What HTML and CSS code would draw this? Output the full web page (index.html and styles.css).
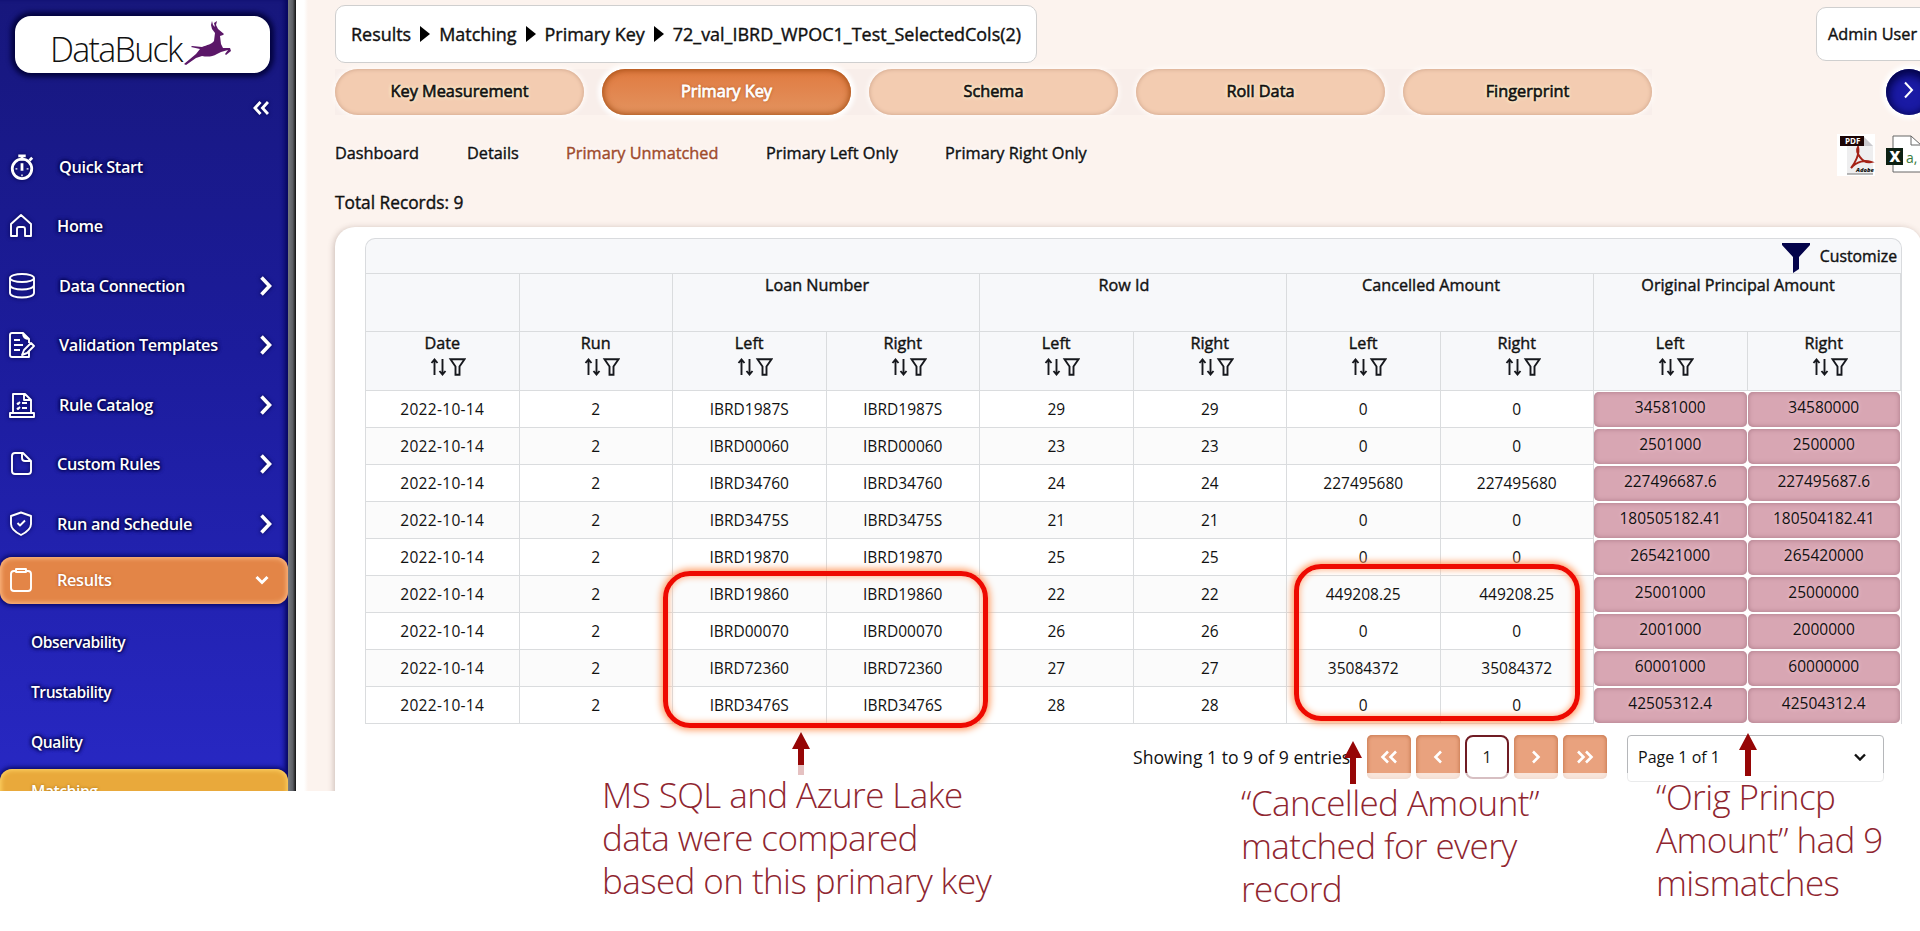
FILE: index.html
```html
<!DOCTYPE html>
<html lang="en">
<head>
<meta charset="UTF-8" />
<meta name="viewport" content="width=device-width, initial-scale=1" />
<title>DataBuck - Primary Unmatched</title>
<link rel="stylesheet" href="styles.css">
</head>
<body>
<!-- shared icons -->
<svg class="defs" width="0" height="0">
  <symbol id="sort-filter" viewBox="0 0 36 18">
    <path d="M4.500 17V2M1.500 5l3-3.500 3 3.500M12.500 1v15M9.500 13l3 3.500 3-3.500" fill="none" stroke="#16181d" stroke-width="1.900"/>
    <path d="M20.500 1.200h14l-5 7.300v8.300h-4V8.500z" fill="none" stroke="#16181d" stroke-width="1.900"/>
  </symbol>
  <symbol id="chevron" viewBox="0 0 14 20">
    <path d="M2.500 1.500L10.500 10l-8 8.500" fill="none" stroke="#fff" stroke-width="3.600"/>
  </symbol>
</svg>

<div class="app">
  <aside class="sidebar">
    <div class="logo">
      <span>DataBuck</span>
      <svg class="buck" width="48" height="46" viewBox="0 0 48 46">
        <path d="M1 44L13 34L17 29L8 27L9 26L19 27C24 25 29 24 31 21L32 13L29 9L28 5L29 1L30 5L32 7L31 3L34 1L33 5L35 9L41 14L40 15L37 16L38 24L40 28L47 28L48 31L43 35L42 34L45 30L38 32L34 34C29 37 24 37 19 36L13 38L3 45Z" fill="#5b1768"/>
      </svg>
    </div>
    <div class="collapse">
      <svg width="16" height="14" viewBox="0 0 16 14" fill="none" stroke="#fff" stroke-width="2.900"><path d="M7.500 1L2 7l5.500 6M15 1L9.500 7l5.500 6"/></svg>
    </div>
    <nav class="menu">
      <a class="item wide"><svg class="icon" viewBox="0 0 26 28"><circle cx="13" cy="16" r="10.500" stroke-width="3"/><path d="M9 2h8M13 2v5M21 7l3-3M13 10v8" stroke-width="3"/><path d="M6 16h2M18 16h2M13 22v2" stroke-width="1.500"/></svg><span>Quick Start</span></a>
      <a class="item"><svg class="icon" viewBox="0 0 26 26"><path d="M2 11L12 2l10 9v12h-6v-7q0-2-2-2h-4q-2 0-2 2v7H2z"/></svg><span>Home</span></a>
      <a class="item wide"><svg class="icon" viewBox="0 0 26 26"><ellipse cx="13" cy="5" rx="12" ry="4"/><path d="M1 5v15c0 6 24 6 24 0V5M1 12c0 6 24 6 24 0"/></svg><span>Data Connection</span><svg class="arrow"><use href="#chevron"/></svg></a>
      <a class="item wide"><svg class="icon" viewBox="0 0 26 26"><path d="M20 19v6H3q-2 0-2-2V3q0-2 2-2h11l6 6v4M14 1q0 6 6 6M5 8h6M5 13h9M5 18h6M13 23l2-5 7-7 3 3-7 7z"/></svg><span>Validation Templates</span><svg class="arrow"><use href="#chevron"/></svg></a>
      <a class="item wide"><svg class="icon" viewBox="0 0 26 26"><path d="M4 21V2h12l6 6v13M15 2v6h7M1 21h24v4H1zM8 11l1 1 2-2M8 16l1 1 2-2M13 11h5M13 16h5"/></svg><span>Rule Catalog</span><svg class="arrow"><use href="#chevron"/></svg></a>
      <a class="item"><svg class="icon" viewBox="0 0 26 26"><path d="M6 2h8l8 8v10q0 3-3 3H6q-3 0-3-3V5q0-3 3-3zM13 2v5q0 3 3 3h6"/></svg><span>Custom Rules</span><svg class="arrow"><use href="#chevron"/></svg></a>
      <a class="item"><svg class="icon" viewBox="0 0 26 26"><path d="M12 1.500l10 3.500v8q0 6-10 11Q2 19 2 13V5zM8.500 12l2.500 2.500 5-5"/></svg><span>Run and Schedule</span><svg class="arrow"><use href="#chevron"/></svg></a>
      <a class="item active"><svg class="icon" viewBox="0 0 26 26"><path d="M7 4H5Q2 4 2 7v14q0 3 3 3h14q3 0 3-3V7q0-3-3-3h-2M7 2h10v3H7z"/></svg><span>Results</span><svg class="down" viewBox="0 0 14 10"><path d="M1.500 2L7 7.500 12.500 2" fill="none" stroke="#fff" stroke-width="3"/></svg></a>
    </nav>
    <div class="submenu">
      <a>Observability</a>
      <a>Trustability</a>
      <a>Quality</a>
      <a class="current">Matching</a>
    </div>
  </aside>
  <div class="scrollbar"></div>

  <main class="main">
    <div class="topbar">
      <div class="breadcrumb"><span>Results</span><i></i><span>Matching</span><i></i><span>Primary Key</span><i></i><span>72_val_IBRD_WPOC1_Test_SelectedCols(2)</span></div>
      <div class="user">Admin User</div>
    </div>

    <div class="tabs">
      <div class="tab-list">
        <button class="tab">Key Measurement</button>
        <button class="tab on">Primary Key</button>
        <button class="tab">Schema</button>
        <button class="tab">Roll Data</button>
        <button class="tab">Fingerprint</button>
      </div>
      <button class="next"><svg width="12" height="18" viewBox="0 0 12 18"><path d="M2 1.500L9 9l-7 7.500" fill="none" stroke="#fff" stroke-width="2"/></svg></button>
    </div>

    <div class="subtabs">
      <a class="s1">Dashboard</a>
      <a class="s2">Details</a>
      <a class="s3">Primary Unmatched</a>
      <a class="s4">Primary Left Only</a>
      <a class="s5">Primary Right Only</a>
      <div class="exports">
        <svg width="38" height="42" viewBox="0 0 38 42">
          <path d="M0 0h38v42H0z" fill="#fff"/>
          <path d="M10 3h17l9 9v28H10z" fill="#eeeeef"/><path d="M27 3v9h9z" fill="#c9c9cd"/><path d="M10 40h26" stroke="#777"/>
          <path d="M14 34C18 29 23 20 21 13C18 18 25 30 34 28C28 26 20 27 14 34Z" fill="none" stroke="#a32116" stroke-width="2"/>
          <path d="M3 2h24v10H3z" fill="#1c0505"/>
          <text x="8" y="10" font-size="8" font-weight="700" fill="#fff">PDF</text>
          <text x="19" y="38" font-size="5.800" font-weight="800" font-style="italic" fill="#111">Adobe</text>
        </svg>
        <svg width="36" height="42" viewBox="0 0 36 42">
          <path d="M8 2h18l9 8v28H8z" fill="#fff"/>
          <path d="M36 38H8V2h18l10 9M26 2v9h10" fill="none" stroke="#666"/>
          <path d="M1 14h17v17H1z" fill="#0d2013"/>
          <text x="4.500" y="28" font-size="15" font-weight="800" fill="#fff">X</text>
          <text x="21" y="29" font-size="14" fill="#3c7c3e">a,</text>
        </svg>
      </div>
    </div>

    <div class="total">Total Records: 9</div>

    <section class="card">
      <div class="table-wrap">
        <div class="caption">
          <svg width="28" height="30" viewBox="0 0 28 30"><path d="M0 0h28v2L17 14v12l-6 4V14L0 2z" fill="#03034a"/></svg>
          <span>Customize</span>
        </div>
        <table>
          <thead>
            <tr class="groups"><th></th><th></th><th colspan="2">Loan Number</th><th colspan="2">Row Id</th><th colspan="2">Cancelled Amount</th><th colspan="2">Original Principal Amount</th></tr>
            <tr class="cols">
              <th>Date<svg><use href="#sort-filter"/></svg></th><th>Run<svg><use href="#sort-filter"/></svg></th>
              <th>Left<svg><use href="#sort-filter"/></svg></th><th>Right<svg><use href="#sort-filter"/></svg></th>
              <th>Left<svg><use href="#sort-filter"/></svg></th><th>Right<svg><use href="#sort-filter"/></svg></th>
              <th>Left<svg><use href="#sort-filter"/></svg></th><th>Right<svg><use href="#sort-filter"/></svg></th>
              <th>Left<svg><use href="#sort-filter"/></svg></th><th>Right<svg><use href="#sort-filter"/></svg></th>
            </tr>
          </thead>
          <tbody>
            <tr><td>2022-10-14</td><td>2</td><td>IBRD1987S</td><td>IBRD1987S</td><td>29</td><td>29</td><td>0</td><td>0</td><td class="diff"><div>34581000</div></td><td class="diff"><div>34580000</div></td></tr>
            <tr><td>2022-10-14</td><td>2</td><td>IBRD00060</td><td>IBRD00060</td><td>23</td><td>23</td><td>0</td><td>0</td><td class="diff"><div>2501000</div></td><td class="diff"><div>2500000</div></td></tr>
            <tr><td>2022-10-14</td><td>2</td><td>IBRD34760</td><td>IBRD34760</td><td>24</td><td>24</td><td>227495680</td><td>227495680</td><td class="diff"><div>227496687.6</div></td><td class="diff"><div>227495687.6</div></td></tr>
            <tr><td>2022-10-14</td><td>2</td><td>IBRD3475S</td><td>IBRD3475S</td><td>21</td><td>21</td><td>0</td><td>0</td><td class="diff"><div>180505182.41</div></td><td class="diff"><div>180504182.41</div></td></tr>
            <tr><td>2022-10-14</td><td>2</td><td>IBRD19870</td><td>IBRD19870</td><td>25</td><td>25</td><td>0</td><td>0</td><td class="diff"><div>265421000</div></td><td class="diff"><div>265420000</div></td></tr>
            <tr><td>2022-10-14</td><td>2</td><td>IBRD19860</td><td>IBRD19860</td><td>22</td><td>22</td><td>449208.25</td><td>449208.25</td><td class="diff"><div>25001000</div></td><td class="diff"><div>25000000</div></td></tr>
            <tr><td>2022-10-14</td><td>2</td><td>IBRD00070</td><td>IBRD00070</td><td>26</td><td>26</td><td>0</td><td>0</td><td class="diff"><div>2001000</div></td><td class="diff"><div>2000000</div></td></tr>
            <tr><td>2022-10-14</td><td>2</td><td>IBRD72360</td><td>IBRD72360</td><td>27</td><td>27</td><td>35084372</td><td>35084372</td><td class="diff"><div>60001000</div></td><td class="diff"><div>60000000</div></td></tr>
            <tr><td>2022-10-14</td><td>2</td><td>IBRD3476S</td><td>IBRD3476S</td><td>28</td><td>28</td><td>0</td><td>0</td><td class="diff"><div>42505312.4</div></td><td class="diff"><div>42504312.4</div></td></tr>
          </tbody>
        </table>
      </div>
      <div class="pager">
        <span class="showing">Showing 1 to 9 of 9 entries</span>
        <button><svg width="18" height="14" viewBox="0 0 18 14"><path d="M8 1.500L2.500 7 8 12.500M16 1.500L10.500 7l5.500 5.500"/></svg></button>
        <button><svg width="10" height="14" viewBox="0 0 10 14"><path d="M8 1.500L2.500 7 8 12.500"/></svg></button>
        <button class="page">1</button>
        <button><svg width="10" height="14" viewBox="0 0 10 14"><path d="M2 1.500L7.500 7 2 12.500"/></svg></button>
        <button><svg width="18" height="14" viewBox="0 0 18 14"><path d="M2 1.500L7.500 7 2 12.500M10 1.500L15.500 7 10 12.500"/></svg></button>
        <div class="select"><span>Page 1 of 1</span><svg width="12" height="8" viewBox="0 0 12 8"><path d="M1 1.500l5 5 5-5" fill="none" stroke="#111" stroke-width="2.400"/></svg></div>
      </div>
    </section>
  </main>
</div>

<!-- callouts over the table -->
<div class="mark mark-key"></div>
<div class="mark mark-cancelled"></div>
<div class="fade"></div>
<svg class="up up-key" viewBox="0 0 18 43"><path d="M9 0l9 17h-6v16H6V17H0z"/><path d="M6 33h6v10H6z" opacity=".25"/></svg>
<svg class="up up-cancelled" viewBox="0 0 18 43"><path d="M9 0l9 17h-6v26H6V17H0z"/></svg>
<svg class="up up-orig" viewBox="0 0 18 43"><path d="M9 0l9 17h-6v26H6V17H0z"/></svg>
<p class="note note-key">MS SQL and Azure Lake<br>data were compared<br>based on this primary key</p>
<p class="note note-cancelled">“Cancelled Amount”<br>matched for every<br>record</p>
<p class="note note-orig">“Orig Princp<br>Amount” had 9<br>mismatches</p>
</body>
</html>
```

FILE: styles.css
```css
* {
  box-sizing: border-box;
}
body {
  margin: 0;
  width: 1920px;
  height: 931px;
  position: relative;
  overflow: hidden;
  background: #fff;
  color: #111;
  font-family: 'Open Sans', 'Noto Sans', sans-serif;
  font-size: 15.5px;
}
.defs {
  position: absolute;
}
button {
  font-family: inherit;
  border: none;
  padding: 0;
}
.app {
  display: flex;
  height: 791px;
  overflow: hidden;
}

/* sidebar */
.sidebar {
  flex: 0 0 288px;
  background: linear-gradient(#17177c, #1c1c9c 45%, #2828c4);
  box-shadow: inset -5px 0 5px -2px #05055c;
  color: #fff;
  font-size: 16.3px;
  font-weight: 600;
  text-shadow: 0 0 4px #00004a, 0 0 4px #00004a, 0 0 3px #00004a;
}
.logo {
  display: flex;
  align-items: center;
  width: 255px;
  height: 57px;
  margin: 16px 0 0 15px;
  padding-left: 35px;
  border-radius: 16px;
  background: #fff;
  box-shadow: 0 0 5px 4px #03033f;
  color: #111;
  font-size: 34px;
  font-weight: 300;
  letter-spacing: -1.7px;
  text-shadow: none;
}
.logo span {
  margin-top: 9px;
  width: 133px;
}
.buck {
  margin-top: -4px;
}
.collapse {
  display: flex;
  justify-content: flex-end;
  padding: 28px 19px 0 0;
  height: 63px;
}
.collapse svg, .icon, .arrow {
  filter: drop-shadow(0 0 2px #00004a);
}
.menu {
  display: flex;
  flex-direction: column;
  padding-top: 1px;
}
.item {
  display: flex;
  align-items: center;
  height: 59.5px;
  padding-left: 9px;
}
.item span {
  flex: 1;
  margin-left: 22px;
  letter-spacing: -.35px;
}
.item.wide span {
  margin-left: 24px;
}
.icon {
  width: 26px;
  height: 26px;
  fill: none;
  stroke: #fff;
  stroke-width: 1.9;
  stroke-linejoin: round;
}
.arrow {
  width: 14px;
  height: 20px;
  margin-right: 15px;
}
.item.active {
  height: 47px;
  margin-top: 3px;
  border-radius: 12px;
  background: #e38547;
  box-shadow: inset 0 0 5px 1px #ffc08b, 0 0 4px 2px #0a0a6c;
  text-shadow: 0 0 3px #a8501c;
}
.item.active .icon {
  filter: none;
}
.down {
  width: 14px;
  height: 10px;
  margin-right: 19px;
}
.submenu {
  display: flex;
  flex-direction: column;
  padding-top: 13px;
  font-size: 15.6px;
  letter-spacing: -.45px;
}
.submenu a {
  height: 50px;
  line-height: 50px;
  padding-left: 31px;
}
.submenu .current {
  margin-top: 2px;
  line-height: 44px;
  border-radius: 12px;
  background: #e9a93b;
  box-shadow: inset 0 0 5px 1px #ffd669, 0 0 4px 2px #0a0a6c;
  text-shadow: 0 0 3px #a06a10;
}
.scrollbar {
  flex: 0 0 8px;
  background: linear-gradient(90deg, #777b80, #5b5d63 60%, #111);
}

/* main area */
.main {
  flex: 1;
  min-width: 0;
  padding: 5px 0 0 39px;
  background: linear-gradient(90deg, #fff 8px, #fcf3ee 12px);
}
.topbar {
  display: flex;
  justify-content: space-between;
}
.breadcrumb, .user {
  display: flex;
  align-items: center;
  background: #fff;
  border: 1px solid #cfcfcf;
  border-radius: 10px;
}
.breadcrumb, .user, .tab, .subtabs a, .total, .caption span, th {
  font-weight: 400;
  -webkit-text-stroke: .4px;
}
.breadcrumb {
  width: 702px;
  height: 58px;
  padding: 0 0 1px 15px;
  font-size: 17.95px;
  white-space: nowrap;
}
.breadcrumb i {
  margin: 0 9px;
  border-left: 10px solid #000;
  border-top: 8px solid transparent;
  border-bottom: 8px solid transparent;
}
.user {
  width: 120px;
  height: 54px;
  margin: 2px -16px 0 0;
  padding: 0 0 1px 11px;
  font-size: 16.3px;
}
.tabs {
  display: flex;
  justify-content: space-between;
  margin-top: 6px;
}
.tab-list {
  display: flex;
  gap: 18px;
  background: #f8eeea;
}
.tab {
  width: 249px;
  height: 46px;
  padding-bottom: 2px;
  border-radius: 23px;
  background: #f3ccb1;
  box-shadow: inset 0 0 4px #c99f86, 0 0 4px 2px #fffaf7;
  color: #111;
  font-size: 16.3px;
  -webkit-text-stroke: .6px;
  text-shadow: 0 0 4px #fff1cf, 0 0 4px #fff1cf, 0 0 3px #fff1cf;
}
.tab.on {
  background: linear-gradient(#e07a40, #e3935f);
  box-shadow: inset 0 0 6px 1px #a24c12, 0 0 4px 4px #fff;
  color: #fff;
  -webkit-text-stroke: .8px;
  text-shadow: 0 0 3px #943f0c;
}
.next {
  flex: none;
  width: 46px;
  height: 46px;
  margin-right: -12px;
  border-radius: 50%;
  background: #1a1aa4;
  box-shadow: inset 0 3px 8px 3px #03034a, 0 0 4px 4px #fff;
}
.subtabs {
  display: flex;
  align-items: center;
  height: 42px;
  margin-top: 17px;
  font-size: 16.3px;
}
.subtabs a {
  margin-top: -1px;
  text-shadow: 0 0 4px #fff, 0 0 4px #fff;
}
.s1 { width: 132px; }
.s2 { width: 99px; }
.s3 { width: 200px; color: #a04b2c; }
.s4 { width: 179px; }
.s5 { flex: 1; }
.exports {
  display: flex;
  gap: 10px;
  margin-right: -1px;
  padding-top: 3px;
}
.total {
  height: 53px;
  padding-top: 17px;
  font-size: 17.3px;
}

/* results table */
.card {
  width: 1587px;
  height: 600px;
  padding: 11px 0 0 30px;
  border-radius: 20px;
  background: #fff;
  box-shadow: -1px 1px 6px rgba(90, 60, 50, .3);
}
.table-wrap {
  width: 1537px;
  border: 1px solid #d9dbde;
  border-bottom: none;
  border-radius: 10px 10px 0 0;
  background: #f7f8fa;
}
.caption {
  display: flex;
  justify-content: flex-end;
  gap: 10px;
  height: 34px;
  padding: 4px 4px 0 0;
  font-size: 15.8px;
}
.caption span {
  margin-top: 2px;
}
table {
  width: 1536px;
  table-layout: fixed;
  border-collapse: collapse;
  margin-left: -1px;
}
th, td {
  padding: 0;
  border: 1px solid #dadcde;
  text-align: center;
}
td {
  padding-bottom: 1px;
}
td:first-child {
  letter-spacing: .3px;
}
th {
  vertical-align: top;
  font-size: 16.2px;
  line-height: 23px;
}
th svg {
  display: block;
  width: 36px;
  height: 18px;
  margin: 3px auto 0;
  transform: translateX(6px);
}
.groups {
  height: 58px;
}
.groups th {
  padding-right: 18px;
}
.cols {
  height: 59px;
}
tbody tr {
  height: 37px;
  background: #fff;
}
tbody tr:nth-child(even) {
  background: #fbfbfb;
}
.diff {
  padding: 0;
  border-color: #fff;
  background: #fff;
}
.diff div {
  height: 35px;
  line-height: 31px;
  border-radius: 5px;
  background: #d8a6b3;
  box-shadow: inset 0 0 5px #a97886;
  text-shadow: 0 0 4px #f6cbd6;
}

/* pagination */
.pager {
  display: flex;
  align-items: center;
  gap: 5px;
  margin-top: 11px;
  padding-left: 768px;
}
.showing {
  width: 229px;
  font-size: 17.6px;
  white-space: nowrap;
}
.pager button {
  display: flex;
  align-items: center;
  justify-content: center;
  width: 44px;
  height: 44px;
  border-radius: 5px;
  background: #e9a27e;
  box-shadow: inset 0 0 4px #b9683e;
  fill: none;
  stroke: #fff;
  stroke-width: 2.6;
}
.pager .page {
  background: #fff;
  border: 2px solid #701c24;
  border-radius: 8px;
  box-shadow: none;
  color: #222;
  stroke: none;
  font-size: 16px;
}
.select {
  display: flex;
  align-items: center;
  justify-content: space-between;
  width: 257px;
  height: 47px;
  margin: 0 0 -3px 15px;
  padding: 0 17px 3px 10px;
  border: 1px solid #b5b7ba;
  border-radius: 4px;
  font-size: 16px;
}

/* callouts */
.mark {
  position: absolute;
  border: 5px solid #ee0a00;
  border-radius: 27px;
  box-shadow: 0 0 7px 2px #ff9c62, inset 0 0 6px 1px #ffb58a;
}
.mark-key {
  left: 663px;
  top: 571px;
  width: 325px;
  height: 157px;
}
.mark-cancelled {
  left: 1294px;
  top: 564px;
  width: 286px;
  height: 157px;
}
.fade {
  position: absolute;
  left: 600px;
  top: 773px;
  width: 1320px;
  height: 18px;
  background: rgba(255, 255, 255, .72);
}
.up {
  position: absolute;
  width: 18px;
  height: 43px;
  fill: #960606;
}
.up-key {
  left: 792px;
  top: 732px;
}
.up-cancelled {
  left: 1344px;
  top: 741px;
}
.up-orig {
  left: 1739px;
  top: 733px;
}
.note {
  position: absolute;
  margin: 0;
  color: #8f2630;
  font-size: 35px;
  font-weight: 300;
  letter-spacing: -.58px;
  line-height: 43px;
  white-space: nowrap;
}
.note-key {
  left: 602px;
  top: 773px;
}
.note-cancelled {
  left: 1241px;
  top: 781px;
}
.note-orig {
  left: 1656px;
  top: 775px;
}
```
